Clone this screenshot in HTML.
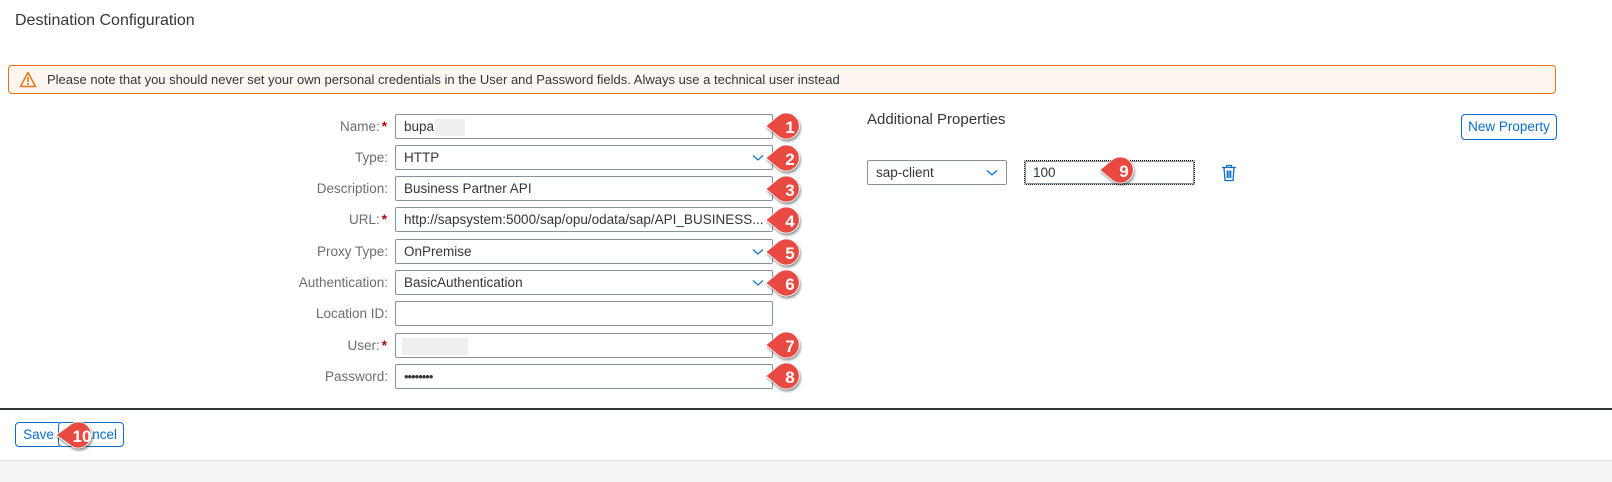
<!DOCTYPE html>
<html><head><style>
*{box-sizing:border-box;margin:0;padding:0}
body{width:1612px;height:482px;background:#fff;font-family:"Liberation Sans",Arial,sans-serif;position:relative;overflow:hidden;color:#32363a}
.abs{position:absolute}
h1{position:absolute;left:15px;top:12px;font-size:16px;font-weight:normal;color:#32363a}
.banner{left:8px;top:65px;width:1548px;height:29px;border:1px solid #e9730c;border-radius:4px;background:#fef7f1;font-size:13px;line-height:27px;padding-left:38px}
.lbl{position:absolute;right:1225px;font-size:13.5px;line-height:25px;color:#6a6d70;text-align:right;white-space:nowrap}
.lbl b{color:#bb0000;font-weight:bold;margin-left:2px}
.inp{position:absolute;left:395px;width:378px;height:25px;border:1px solid #89919a;border-radius:2px;font-size:13.5px;line-height:23px;padding-left:8px;color:#32363a;background:#fff}
.chev{position:absolute;right:8px;top:8px}
.btn{position:absolute;border:1px solid #0a6ed1;border-radius:4px;color:#0a6ed1;font-size:13.5px;background:#fff;text-align:center}
</style></head><body>
<h1>Destination Configuration</h1>
<div class="abs banner">Please note that you should never set your own personal credentials in the User and Password fields. Always use a technical user instead</div>
<svg class="abs" style="left:19px;top:71px" width="18" height="17" viewBox="0 0 18 17"><path d="M9 1.5L16.5 15.5H1.5Z" fill="none" stroke="#e9730c" stroke-width="1.5" stroke-linejoin="round"/><path d="M9 6v5" stroke="#e9730c" stroke-width="1.6"/><circle cx="9" cy="13" r="1" fill="#e9730c"/></svg>

<div class="lbl" style="top:114px">Name:<b>*</b></div>
<div class="lbl" style="top:145px;right:1224px">Type:</div>
<div class="lbl" style="top:176px;right:1224px">Description:</div>
<div class="lbl" style="top:207px">URL:<b>*</b></div>
<div class="lbl" style="top:239px;right:1224px">Proxy Type:</div>
<div class="lbl" style="top:270px;right:1224px">Authentication:</div>
<div class="lbl" style="top:301px;right:1224px">Location ID:</div>
<div class="lbl" style="top:333px">User:<b>*</b></div>
<div class="lbl" style="top:364px;right:1224px">Password:</div>

<div class="inp" style="top:114px">bupa<span style="display:inline-block;width:30px;height:17px;background:#efefef;vertical-align:middle;margin-left:1px"></span></div>
<div class="inp" style="top:145px">HTTP<svg class="chev" width="12" height="8"><path d="M1 1.5L6 6L11 1.5" fill="none" stroke="#0a6ed1" stroke-width="1.2"/></svg></div>
<div class="inp" style="top:176px">Business Partner API</div>
<div class="inp" style="top:207px">http://sapsystem:5000/sap/opu/odata/sap/API_BUSINESS...</div>
<div class="inp" style="top:239px">OnPremise<svg class="chev" width="12" height="8"><path d="M1 1.5L6 6L11 1.5" fill="none" stroke="#0a6ed1" stroke-width="1.2"/></svg></div>
<div class="inp" style="top:270px">BasicAuthentication<svg class="chev" width="12" height="8"><path d="M1 1.5L6 6L11 1.5" fill="none" stroke="#0a6ed1" stroke-width="1.2"/></svg></div>
<div class="inp" style="top:301px"></div>
<div class="inp" style="top:333px"><span style="display:inline-block;width:66px;height:17px;background:#efefef;vertical-align:middle;margin-left:-2px"></span></div>
<div class="inp" style="top:364px;font-size:13px;letter-spacing:-1px">••••••••</div>

<div class="abs" style="left:867px;top:111px;font-size:15px;color:#32363a">Additional Properties</div>
<div class="btn" style="left:1461px;top:114px;width:96px;height:26px;line-height:24px">New Property</div>
<div class="inp" style="left:867px;top:160px;width:140px">sap-client<svg class="chev" width="12" height="8"><path d="M1 1.5L6 6L11 1.5" fill="none" stroke="#0a6ed1" stroke-width="1.2"/></svg></div>
<div class="inp" style="left:1024px;top:160px;width:171px;border:1px dotted #000;outline:1px solid #89919a;outline-offset:-2px">100</div>
<svg class="abs" style="left:1221px;top:164px" width="16" height="18" viewBox="0 0 16 18"><path d="M1 3.5H15M5.5 3.5V1.5H10.5V3.5M3 3.5L4 16.5H12L13 3.5M6.3 6.5V14M8 6.5V14M9.7 6.5V14" fill="none" stroke="#0a6ed1" stroke-width="1.3"/></svg>

<div class="abs" style="left:0;top:408px;width:1612px;height:1.5px;background:#32363a"></div>
<div class="btn" style="left:15px;top:422px;width:47px;height:25px;line-height:23px">Save</div>
<div class="btn" style="left:58px;top:422px;width:66px;height:25px;line-height:23px;text-align:right;padding-right:6px">Cancel</div>
<div class="abs" style="left:0;top:460px;width:1612px;height:22px;background:#f3f4f5;border-top:1px solid #e0e0e0"></div>

<svg width="0" height="0" style="position:absolute"><defs><filter id="sh" x="-30%" y="-30%" width="160%" height="160%"><feDropShadow dx="1" dy="2" stdDeviation="1.2" flood-color="#000" flood-opacity="0.45"/></filter></defs></svg>
<div id="m"></div>
<script>
var ms=[[766,126,'1'],[766,158,'2'],[766,189,'3'],[766,220,'4'],[766,252,'5'],[766,283,'6'],[766,345,'7'],[766,376,'8'],[1100,170,'9'],[56,435,'10']];
var h='';
ms.forEach(function(m){var w=m[2].length>1?16:14;
h+='<svg class="abs" style="left:'+(m[0]-3)+'px;top:'+(m[1]-17)+'px;overflow:visible" width="'+(w+30)+'" height="34"><g transform="translate(3,17)" filter="url(#sh)"><path d="M0 0 L'+(w-2)+' -10 A13 13 0 1 1 '+(w-2)+' 10 Z" fill="#e8483f" stroke="#fff" stroke-width="0.8"/></g><text x="'+(w+13)+'" y="24" text-anchor="middle" font-family="Liberation Sans" font-weight="bold" font-size="17" fill="#fff">'+m[2]+'</text></svg>';});
document.getElementById('m').innerHTML=h;
</script>
</body></html>
